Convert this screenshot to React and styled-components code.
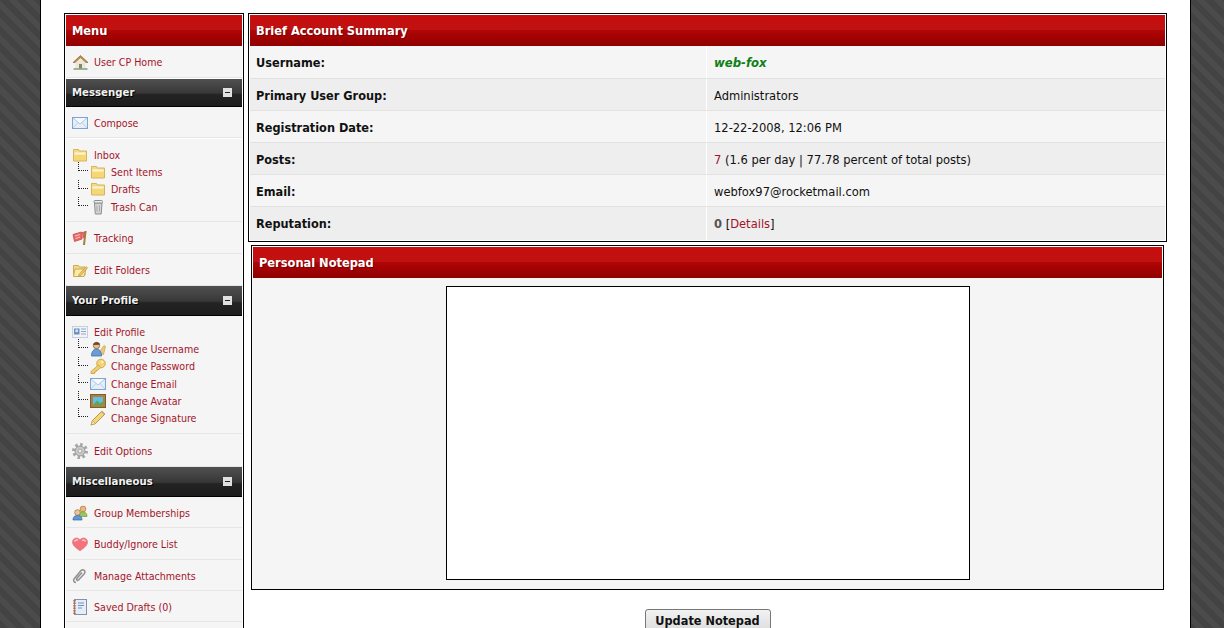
import React from "react";
import styled, { createGlobalStyle } from "styled-components";

const GlobalStyle = createGlobalStyle`
  html, body {
    margin: 0;
    height: 628px;
    overflow: hidden;
    background: #474747 repeating-linear-gradient(45deg, #434343 0 6px, #4b4b4b 6px 12px);
    font-family: "DejaVu Sans", Tahoma, sans-serif;
    font-stretch: condensed;
  }
`;

const Page = styled.div`
  margin: 0 33px 0 40px;
  height: 628px;
  overflow: hidden;
  background: #fff;
  border-left: 1px solid #000;
  border-right: 1px solid #000;
  padding: 13px 23px 0;
  display: flex;
  gap: 4px;
  align-items: flex-start;
`;

const Sidebar = styled.aside`
  width: 180px;
  flex: none;
  border: 1px solid #000;
  padding: 1px;
  box-sizing: border-box;
  background: #fff;
`;

const Main = styled.main`
  flex: 1;
  min-width: 0;
`;

const RedBar = styled.div`
  height: 31px;
  padding: 0 6px;
  display: flex;
  align-items: center;
  color: #fff;
  font-size: 12.7px;
  font-weight: bold;
  text-shadow: 1px 1px 0 rgba(0, 0, 0, 0.3);
  background: linear-gradient(#c80d0d 0, #bf1212 48%, #b00505 50%, #8f0000 100%);
`;

const DarkBar = styled.div`
  height: ${(p) => p.$h}px;
  padding: 0 6px;
  box-sizing: border-box;
  display: flex;
  align-items: center;
  justify-content: space-between;
  color: #f2f2f2;
  font-size: 11.3px;
  font-weight: bold;
  text-shadow: 1px 1px 0 #000;
  border-bottom: 1px solid #000;
  background: linear-gradient(#505050 0, #383838 52%, #232323 58%, #1d1d1d 100%);
`;

const Collapse = styled.span`
  width: 9px;
  height: 9px;
  margin-right: 4px;
  background: #e0e0e0;
  display: flex;
  align-items: center;
  justify-content: center;
  &::before {
    content: "";
    width: 5px;
    height: 1px;
    background: #222;
  }
`;

const NavGroup = styled.div`
  height: ${(p) => p.$h}px;
  box-sizing: border-box;
  background: #f5f5f5;
  border-bottom: 1px solid #e6e6e6;
  padding: ${(p) => (p.$tree ? "7px" : p.$drop ? "2px" : "0")} 6px 0;
  display: flex;
  flex-direction: column;
  justify-content: ${(p) => (p.$tree ? "flex-start" : "center")};
  margin-bottom: ${(p) => p.$gap || 0}px;
`;

const NavRow = styled.div`
  height: 17.3px;
  display: flex;
  align-items: center;
  position: relative;
  padding-left: ${(p) => (p.$sub ? 18 : 0)}px;
`;

const Branch = styled.span`
  position: absolute;
  left: 6px;
  top: -1px;
  width: 9px;
  height: 8px;
  border-left: 1px dotted #222;
  border-bottom: 1px dotted #222;
`;

const IconBox = styled.span`
  width: ${(p) => (p.$sub ? 16 : 17)}px;
  height: 16px;
  margin-right: 5px;
  flex: none;
  display: flex;
  & svg {
    display: block;
  }
`;

const NavLink = styled.a`
  color: #a3142a;
  font-size: 10.6px;
  white-space: nowrap;
  text-decoration: none;
`;

const Box = styled.section`
  border: 1px solid #000;
  padding: 1px;
  background: #fff;
`;

const SummaryRow = styled.div`
  display: grid;
  grid-template-columns: 457px 1fr;
  height: ${(p) => (p.$edge ? 33 : 32)}px;
  background: ${(p) => (p.$alt ? "#eeeeee" : "#f5f5f5")};
  border-bottom: 1px solid #e2e2e2;
  box-sizing: border-box;
  &:last-child {
    border-bottom: 0;
  }
`;

const SummaryLabel = styled.div`
  padding: ${(p) => (p.$edge ? 0 : 2)}px 0 0 6px;
  display: flex;
  align-items: center;
  font-size: 12.6px;
  font-weight: bold;
  color: #111;
  border-right: 1px solid #fff;
`;

const SummaryValue = styled.div`
  padding: ${(p) => (p.$edge ? 0 : 2)}px 0 0 7px;
  display: flex;
  align-items: center;
  font-size: 12.8px;
  color: #111;
  white-space: pre;
`;

const UserName = styled.b`
  color: #0f7f16;
  font-style: italic;
  font-size: 13px;
`;

const RedText = styled.span`
  color: #a3142a;
`;

const GreyBold = styled.b`
  color: #555;
`;

const NoteBox = styled(Box)`
  margin: 3px 3px 0;
  padding: 1px 1px 0;
`;

const NoteBody = styled.div`
  background: #f5f5f5;
  height: 311px;
  padding-top: 8px;
  box-sizing: border-box;
  margin: 0 -1px;
  display: flex;
  justify-content: center;
`;

const NoteArea = styled.textarea`
  width: 524px;
  height: 294px;
  box-sizing: border-box;
  border: 1px solid #000;
  background: #fff;
  resize: none;
  outline: none;
  margin: 0;
`;

const ButtonRow = styled.div`
  display: flex;
  justify-content: center;
  padding-top: 19px;
`;

const Button = styled.button`
  width: 126px;
  height: 28px;
  padding: 0 0 5px;
  border: 1px solid #777;
  border-radius: 3px;
  background: linear-gradient(#f2f2f2, #d8d8d8);
  color: #111;
  font-family: inherit;
  font-stretch: condensed;
  font-size: 12.6px;
  font-weight: bold;
`;

const folderShape = (
  <>
    <path d="M1.500 2.500h5l1 1.500h7v10h-13z" fill="#f5d98a" stroke="#d9b25c" />
    <path d="M2.500 5.500h11v2h-11z" fill="#fdf6d2" />
    <path d="M2.500 8h11v5h-11z" fill="#f6d873" />
  </>
);

const icons = {
  home: (
    <>
      <path d="M8.500 1.500 1 8.500h2.500l5-4.500 5 4.500H16z" fill="#b98a4e" stroke="#8e6a38" strokeWidth="0.7" />
      <path d="M3.500 8.500l5-4.500 5 4.500v6h-10z" fill="#efe7d6" />
      <rect x="7" y="10" width="3" height="4.500" fill="#7b8a78" />
      <path d="M1.500 15h14" stroke="#7a9a68" strokeWidth="1.400" />
    </>
  ),
  mail: (
    <>
      <rect x="0.500" y="2.500" width="15" height="11" fill="#e6eff9" stroke="#7fa4d2" />
      <path d="M1 3l7 6 7-6" fill="#f6f9fd" stroke="#a8c3e4" />
      <path d="M1 13l5-5.500M15 13l-5-5.500" fill="none" stroke="#b8cfe9" />
    </>
  ),
  folder: folderShape,
  trash: (
    <>
      <path d="M4.500 4h7.500l-.8 11H5.300z" fill="#d4d6d6" stroke="#8a8f90" />
      <rect x="4" y="1.500" width="8.500" height="2.500" rx="1" fill="#eceeee" stroke="#8a8f90" />
      <path d="M7 6.500v6M9.500 6.500v6" stroke="#a4a8a9" />
    </>
  ),
  flag: (
    <>
      <path d="M1 4.500 9.500 2l.5 7-7.500 2.500z" fill="#ea6a6a" stroke="#c94848" strokeWidth="0.8" />
      <path d="M3 6l5-1.500M3.500 8.500 8 7" stroke="#f8c2c2" />
      <path d="M10 2l4.500-.5-1 6-3 .7z" fill="#e36060" />
      <path d="M13.500 1 12 15" stroke="#a17f3f" strokeWidth="2" />
    </>
  ),
  editFolder: (
    <>
      <path d="M1.500 3.500h5l1 1.500h5.500v8.500h-11.500z" fill="#f4d888" stroke="#d0aa55" />
      <path d="M3 7h11l-2 7.500H1.500z" fill="#fbeaa8" stroke="#d0aa55" />
      <path d="M7 12.500l7-8 1.500 1.300-7 8-2 .6z" fill="#efc765" stroke="#b48f36" strokeWidth="0.6" />
    </>
  ),
  card: (
    <>
      <rect x="0.500" y="2.500" width="15" height="11" fill="#f0f3f8" stroke="#c4cfe0" />
      <rect x="2" y="4.500" width="5.500" height="6" fill="#6f8fbb" />
      <circle cx="4.700" cy="6.800" r="1.500" fill="#d9e3ef" />
      <path d="M9 5h5M9 7.500h5M9 10h5" stroke="#93a5c0" />
    </>
  ),
  userEdit: (
    <>
      <path d="M8 13l6-8.500 1.500 1-2 8z" fill="#eccb73" stroke="#b89a45" strokeWidth="0.6" />
      <circle cx="6.500" cy="4.500" r="3.200" fill="#e7bd92" stroke="#7c5228" strokeWidth="0.7" />
      <path d="M3.200 4c.4-3.300 6-3.800 6.800-.3z" fill="#704520" />
      <path d="M1.500 15c0-5 2.500-7 5-7s5 2 5 7z" fill="#6a9dd8" stroke="#3e6fa6" strokeWidth="0.8" />
    </>
  ),
  key: (
    <>
      <circle cx="11" cy="5.500" r="4.300" fill="#f3d57a" stroke="#cfa94c" />
      <circle cx="12.300" cy="4.200" r="1.100" fill="#fbf3cf" />
      <path d="M8.500 7 1 13.500V15.500h3.500V14h1.500v-1.500h1.500L10.500 9.500z" fill="#f1d06c" stroke="#cfa94c" />
    </>
  ),
  avatar: (
    <>
      <rect x="0.500" y="1.500" width="15" height="13" fill="#ab8240" stroke="#7d5f2c" />
      <rect x="3" y="4" width="10" height="8" fill="#5fbfe4" />
      <path d="M3 12l4-4.500 3 2.500 3-1.500V12z" fill="#5aa85e" />
    </>
  ),
  pencil: (
    <>
      <path d="M12 1 15 4 5.500 13.500 1 15 2.500 10.500z" fill="#f3d57a" stroke="#b8963f" />
      <path d="M1 15l1.500-4.500 3 3z" fill="#f5e5c6" stroke="#b8963f" strokeWidth="0.6" />
      <path d="M11 2l3 3 1-1-3-3z" fill="#e2a18f" />
    </>
  ),
  gear: (
    <>
      <circle cx="8" cy="8" r="6.500" fill="none" stroke="#a6a6a6" strokeWidth="3" strokeDasharray="2.500 2.500" />
      <circle cx="8" cy="8" r="5" fill="#c9c9c9" stroke="#979797" />
      <circle cx="8" cy="8" r="2" fill="#ededed" stroke="#a8a8a8" />
    </>
  ),
  group: (
    <>
      <circle cx="11" cy="4" r="2.900" fill="#e6bb80" stroke="#a87a3e" strokeWidth="0.7" />
      <path d="M7 11.500c0-3.500 2-4.500 4-4.500s4 1 4 4.500z" fill="#9cc462" stroke="#6e9a3c" strokeWidth="0.7" />
      <circle cx="5.500" cy="7.500" r="2.800" fill="#eec5a0" stroke="#9a6a30" strokeWidth="0.7" />
      <path d="M1 15c0-3.500 2-4.500 4.500-4.500s4.500 1 4.500 4.500z" fill="#5e98d6" stroke="#36689f" strokeWidth="0.7" />
    </>
  ),
  heart: (
    <>
      <path d="M8 14.800C3 11.500.5 9 .5 6 .5 3.500 2.500 2 4.500 2 6 2 7.300 2.800 8 4c.7-1.200 2-2 3.500-2 2 0 4 1.500 4 4 0 3-2.500 5.500-7.500 8.800z" fill="#f2737e" stroke="#e56a75" strokeWidth="0.6" />
      <path d="M2.500 5.500c.5-1.300 2-2 3.500-1.300M10 4.500c1.500-.8 3-.3 3.500 1" stroke="#fcd0d4" strokeWidth="1.400" fill="none" />
    </>
  ),
  clip: (
    <path d="M4 14.500c-2 0-3-2-2-3.500l7-8.500c1.500-1.500 4-.5 4 1.500 0 .7-.3 1.200-.7 1.700L6.500 12c-.8.8-2.200.2-2-1l.5-.8L10 4.500" fill="none" stroke="#8f9090" strokeWidth="1.500" />
  ),
  notes: (
    <>
      <rect x="2.500" y="0.500" width="12" height="15" fill="#e6edf6" stroke="#8593aa" />
      <path d="M2.500 1v14" stroke="#b86a48" strokeWidth="2.400" strokeDasharray="1.500 1" />
      <path d="M6 4h6M6 6.500h6M6 9h4" stroke="#6d93c6" />
    </>
  ),
};

const Icon = ({ name, sub }) => (
  <IconBox $sub={sub}>
    <svg width="16" height="16" viewBox="0 0 16 16">
      {icons[name]}
    </svg>
  </IconBox>
);

const Item = ({ icon, label, sub }) => (
  <NavRow $sub={sub}>
    {sub && <Branch />}
    <Icon name={icon} sub={sub} />
    <NavLink href="#">{label}</NavLink>
  </NavRow>
);

const Single = ({ icon, label, h = 31, gap, drop }) => (
  <NavGroup $h={h} $gap={gap} $drop={drop}>
    <Item icon={icon} label={label} />
  </NavGroup>
);

const Head = ({ title, h }) => (
  <DarkBar $h={h}>
    {title}
    <Collapse />
  </DarkBar>
);

const summary = [
  ["Username:", <UserName>web-fox</UserName>],
  ["Primary User Group:", "Administrators"],
  ["Registration Date:", "12-22-2008, 12:06 PM"],
  ["Posts:", <><RedText>7</RedText> (1.6 per day | 77.78 percent of total posts)</>],
  ["Email:", "webfox97@rocketmail.com"],
  ["Reputation:", <><GreyBold>0</GreyBold> [<RedText>Details</RedText>]</>],
];

export default function App() {
  return (
    <>
      <GlobalStyle />
      <Page>
        <Sidebar>
          <RedBar>Menu</RedBar>
          <Single drop icon="home" label="User CP Home" h={32} gap={1} />
          <Head title="Messenger" h={28} />
          <Single drop icon="mail" label="Compose" h={31} gap={1} />
          <NavGroup $tree $h={83}>
            <Item icon="folder" label="Inbox" />
            <Item sub icon="folder" label="Sent Items" />
            <Item sub icon="folder" label="Drafts" />
            <Item sub icon="trash" label="Trash Can" />
          </NavGroup>
          <Single drop icon="flag" label="Tracking" h={32} />
          <Single drop icon="editFolder" label="Edit Folders" h={32} />
          <Head title="Your Profile" h={30} />
          <NavGroup $tree $h={118}>
            <Item icon="card" label="Edit Profile" />
            <Item sub icon="userEdit" label="Change Username" />
            <Item sub icon="key" label="Change Password" />
            <Item sub icon="mail" label="Change Email" />
            <Item sub icon="avatar" label="Change Avatar" />
            <Item sub icon="pencil" label="Change Signature" />
          </NavGroup>
          <Single drop icon="gear" label="Edit Options" h={33} />
          <Head title="Miscellaneous" h={30} />
          <Single drop icon="group" label="Group Memberships" />
          <Single drop icon="heart" label="Buddy/Ignore List" h={32} />
          <Single drop icon="clip" label="Manage Attachments" />
          <Single drop icon="notes" label="Saved Drafts (0)" />
          <NavGroup $h={40} />
        </Sidebar>
        <Main>
          <Box>
            <RedBar>Brief Account Summary</RedBar>
            {summary.map(([label, value], i) => {
              const edge = i === 0 || i === 5;
              return (
                <SummaryRow key={label} $alt={i % 2 === 1} $edge={edge}>
                  <SummaryLabel $edge={edge}>{label}</SummaryLabel>
                  <SummaryValue $edge={edge}>{value}</SummaryValue>
                </SummaryRow>
              );
            })}
          </Box>
          <NoteBox>
            <RedBar>Personal Notepad</RedBar>
            <NoteBody>
              <NoteArea />
            </NoteBody>
          </NoteBox>
          <ButtonRow>
            <Button>Update Notepad</Button>
          </ButtonRow>
        </Main>
      </Page>
    </>
  );
}
